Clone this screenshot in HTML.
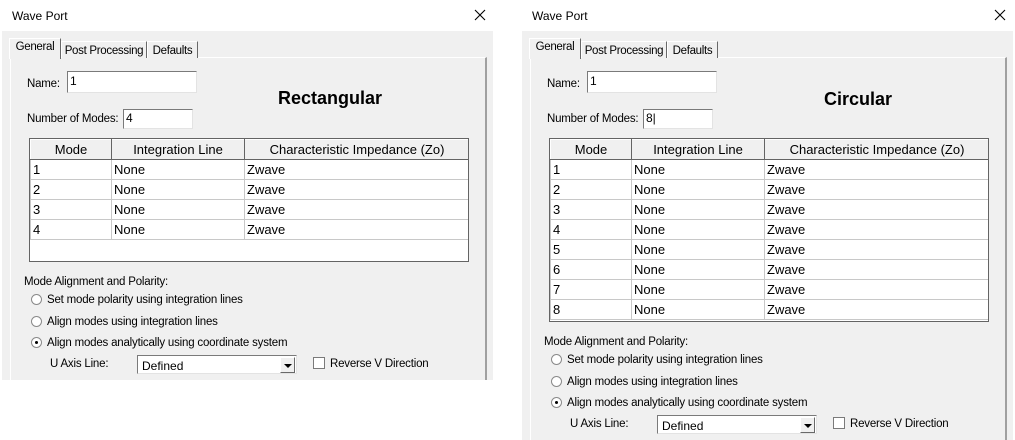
<!DOCTYPE html>
<html><head><style>
*{margin:0;padding:0;box-sizing:border-box}
body{width:1015px;height:440px;background:#fff;position:relative;overflow:hidden;font-family:"Liberation Sans",sans-serif;color:#000}
.d{position:absolute;top:0;width:491px;background:#f0f0f0}
.tb{position:absolute;left:0;top:0;width:100%;height:31px;background:#fff}
.tt{position:absolute;left:10px;top:9px;font-size:12px}
.x{position:absolute;right:7px;top:9px;width:12px;height:12px}
.a{position:absolute;white-space:nowrap}
.s{font-size:11.5px;letter-spacing:-0.2px}
.panel{position:absolute;left:8px;top:57px;width:477px;border-left:1px solid #fff;border-top:1px solid #fff;border-right:2px solid #a0a0a0}
.tab{position:absolute;font-size:11.5px;letter-spacing:-0.3px;background:#f0f0f0;border:1px solid #fff;border-right:1px solid #696969;border-bottom:none;padding-top:3px;text-align:center;white-space:nowrap}
.in{position:absolute;background:#fff;border:1px solid #7a7a7a;border-right-color:#e3e3e3;border-bottom-color:#e3e3e3;font-size:12px;padding:2px 2px}
table{position:absolute;border-collapse:collapse;background:#fff;font-size:13px}
.tw{position:absolute;border:1px solid #646464;background:#fff;overflow:hidden}
td,th{border:1px solid #c8c8c8;height:20px;padding:0 2px;text-align:left;font-weight:normal;white-space:nowrap}
th{background:#f0f0f0;text-align:center;border:1px solid #a0a0a0;border-top-color:#fff;border-left-color:#fff;border-right-color:#646464;border-bottom-color:#646464}
.r{position:absolute;width:11px;height:11px;border-radius:50%;border:1px solid #8a8a8a;background:#fff}
.r.on::after{content:"";position:absolute;left:3px;top:3px;width:3px;height:3px;border-radius:50%;background:#000}
.big{position:absolute;font-size:18px;font-weight:bold}
.sel{position:absolute;background:#fff;border:1px solid #7a7a7a;border-right-color:#e3e3e3;border-bottom-color:#e3e3e3;font-size:12px;padding:3px 4px}
.btn{position:absolute;right:1px;top:1px;width:15px;height:16px;background:#f0f0f0;border:1px solid #fff;border-right-color:#696969;border-bottom-color:#696969}
.btn::after{content:"";position:absolute;left:3px;top:6px;border-left:4px solid transparent;border-right:4px solid transparent;border-top:4px solid #000}
.cb{position:absolute;width:12px;height:12px;background:#fff;border:1px solid #7a7a7a}
</style></head><body>

<div class="d" style="left:2px;height:380px">
 <div class="tb"><div class="tt">Wave Port</div><svg class="x" viewBox="0 0 12 12"><path d="M1 1L11 11M11 1L1 11" stroke="#000" stroke-width="1.1"/></svg></div>
 <div class="panel" style="height:323px"></div>
 <div class="tab" style="left:7px;top:38px;width:52px;height:21px;z-index:2;padding-top:2px">General</div>
 <div class="tab" style="left:59px;top:41px;width:86px;height:17px">Post Processing</div>
 <div class="tab" style="left:145px;top:41px;width:51px;height:17px">Defaults</div>
 <div class="a s" style="left:25px;top:78px">Name:</div>
 <div class="in" style="left:65px;top:71px;width:130px;height:22px">1</div>
 <div class="a s" style="left:25px;top:113px">Number of Modes:</div>
 <div class="in" style="left:121px;top:109px;width:70px;height:20px;padding-top:1px">4</div>
 <div class="big" style="left:276px;top:88px">Rectangular</div>
 <div class="tw" style="left:27px;top:138px;width:440px;height:124px">
 <table style="left:0;top:0;width:440px">
 <tr><th style="width:81px">Mode</th><th style="width:133px">Integration Line</th><th>Characteristic Impedance (Zo)</th></tr>
 <tr><td>1</td><td>None</td><td>Zwave</td></tr>
 <tr><td>2</td><td>None</td><td>Zwave</td></tr>
 <tr><td>3</td><td>None</td><td>Zwave</td></tr>
 <tr><td>4</td><td>None</td><td>Zwave</td></tr>
 </table></div>
 <div class="a s" style="left:22px;top:276px">Mode Alignment and Polarity:</div>
 <div class="r" style="left:29px;top:294px"></div><div class="a s" style="left:45px;top:294px">Set mode polarity using integration lines</div>
 <div class="r" style="left:29px;top:316px"></div><div class="a s" style="left:45px;top:316px">Align modes using integration lines</div>
 <div class="r on" style="left:29px;top:337px"></div><div class="a s" style="left:45px;top:337px">Align modes analytically using coordinate system</div>
 <div class="a s" style="left:48px;top:358px">U Axis Line:</div>
 <div class="sel" style="left:135px;top:355px;width:160px;height:19px">Defined<div class="btn"></div></div>
 <div class="cb" style="left:311px;top:357px"></div><div class="a s" style="left:328px;top:358px">Reverse V Direction</div>
</div>

<div class="d" style="left:522px;height:440px">
 <div class="tb"><div class="tt">Wave Port</div><svg class="x" viewBox="0 0 12 12"><path d="M1 1L11 11M11 1L1 11" stroke="#000" stroke-width="1.1"/></svg></div>
 <div class="panel" style="height:383px"></div>
 <div class="tab" style="left:7px;top:38px;width:52px;height:21px;z-index:2;padding-top:2px">General</div>
 <div class="tab" style="left:59px;top:41px;width:86px;height:17px">Post Processing</div>
 <div class="tab" style="left:145px;top:41px;width:51px;height:17px">Defaults</div>
 <div class="a s" style="left:25px;top:78px">Name:</div>
 <div class="in" style="left:65px;top:71px;width:130px;height:22px">1</div>
 <div class="a s" style="left:25px;top:113px">Number of Modes:</div>
 <div class="in" style="left:121px;top:109px;width:70px;height:20px;padding-top:1px">8|</div>
 <div class="big" style="left:302px;top:89px">Circular</div>
 <div class="tw" style="left:27px;top:138px;width:440px;height:184px">
 <table style="left:0;top:0;width:440px">
 <tr><th style="width:81px">Mode</th><th style="width:133px">Integration Line</th><th>Characteristic Impedance (Zo)</th></tr>
 <tr><td>1</td><td>None</td><td>Zwave</td></tr>
 <tr><td>2</td><td>None</td><td>Zwave</td></tr>
 <tr><td>3</td><td>None</td><td>Zwave</td></tr>
 <tr><td>4</td><td>None</td><td>Zwave</td></tr>
 <tr><td>5</td><td>None</td><td>Zwave</td></tr>
 <tr><td>6</td><td>None</td><td>Zwave</td></tr>
 <tr><td>7</td><td>None</td><td>Zwave</td></tr>
 <tr><td>8</td><td>None</td><td>Zwave</td></tr>
 </table></div>
 <div class="a s" style="left:22px;top:336px">Mode Alignment and Polarity:</div>
 <div class="r" style="left:29px;top:354px"></div><div class="a s" style="left:45px;top:354px">Set mode polarity using integration lines</div>
 <div class="r" style="left:29px;top:376px"></div><div class="a s" style="left:45px;top:376px">Align modes using integration lines</div>
 <div class="r on" style="left:29px;top:397px"></div><div class="a s" style="left:45px;top:397px">Align modes analytically using coordinate system</div>
 <div class="a s" style="left:48px;top:418px">U Axis Line:</div>
 <div class="sel" style="left:135px;top:415px;width:160px;height:19px">Defined<div class="btn"></div></div>
 <div class="cb" style="left:311px;top:417px"></div><div class="a s" style="left:328px;top:418px">Reverse V Direction</div>
</div>
</body></html>
